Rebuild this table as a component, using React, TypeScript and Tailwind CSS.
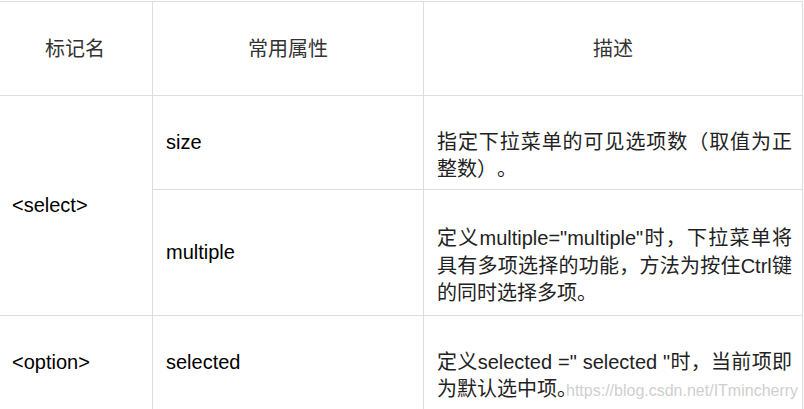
const font = "font-['Liberation_Sans','Noto_Sans_CJK_SC',sans-serif]";

function Head({ children }: { children: React.ReactNode }) {
  return (
    <div className="bg-white flex items-center justify-center text-[20px] text-[#333]">
      {children}
    </div>
  );
}

function Cell({ children, className = "" }: { children: React.ReactNode; className?: string }) {
  return (
    <div className={`bg-white flex items-center text-[20px] leading-[27.5px] text-black ${className}`}>
      {children}
    </div>
  );
}

function Desc({ children }: { children: React.ReactNode }) {
  return (
    <div className="bg-white flex items-center pl-[13px] pr-[10px] text-[20px] leading-[27.5px] text-[#222] [text-spacing-trim:space-all]">
      <p className="mt-[27.5px] text-justify w-full">{children}</p>
    </div>
  );
}

export default function App() {
  return (
    <div className={`relative w-[804px] h-[409px] overflow-hidden bg-white ${font}`}>
      {/* table */}
      <div className="mt-px -ml-[3px] w-[806px] grid grid-cols-[154px_270px_378px] grid-rows-[93px_93px_125px_93px] gap-px p-px bg-[#dddddd]">
        <Head>标记名</Head>
        <Head>常用属性</Head>
        <Head>描述</Head>

        <Cell className="row-span-2 pl-[14px]">&lt;select&gt;</Cell>
        <Cell className="pl-[13px]">size</Cell>
        <Desc>指定下拉菜单的可见选项数（取值为正整数）。</Desc>

        <Cell className="pl-[13px]">multiple</Cell>
        <Desc>定义multiple="multiple"时，下拉菜单将具有多项选择的功能，方法为按住Ctrl键的同时选择多项。</Desc>

        <Cell className="pl-[14px]">&lt;option&gt;</Cell>
        <Cell className="pl-[13px]">selected</Cell>
        <Desc>定义selected =" selected "时，当前项即为默认选中项。</Desc>
      </div>

      {/* watermark */}
      <div className="absolute left-[566px] top-[382px] text-[16px] leading-[18px] text-[#cfcfcf] font-['Liberation_Sans',sans-serif]">
        https://blog.csdn.net/ITmincherry
      </div>
    </div>
  );
}
